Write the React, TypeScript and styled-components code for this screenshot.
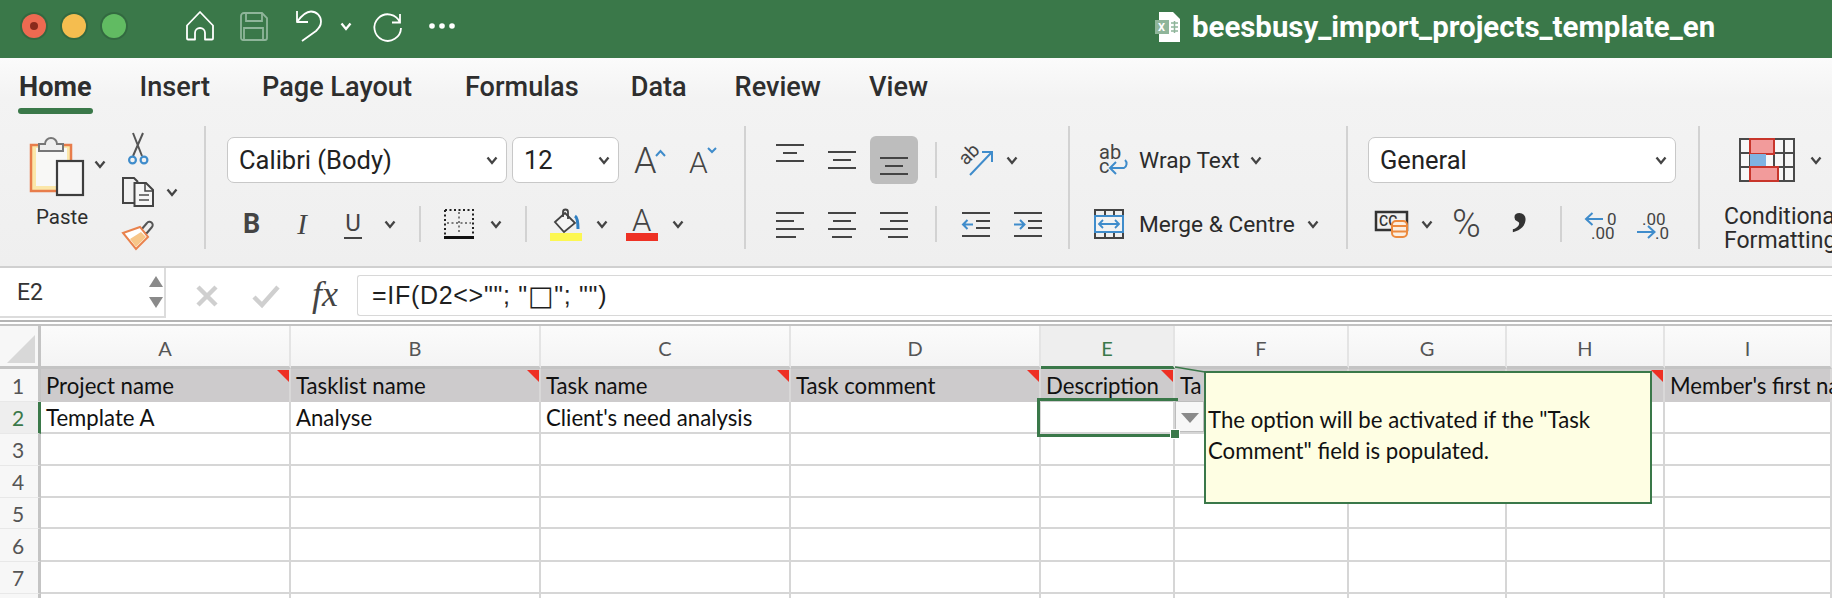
import React from 'react';
import styled, {createGlobalStyle} from 'styled-components';

const GREEN = '#3a7849';
const BLUE = '#3f8ccb';
const INK = '#444444';
const UI_FONT = 'Roboto, "Liberation Sans", sans-serif';
const CELL_FONT = 'Lato, "Open Sans", sans-serif';

const GlobalStyle = createGlobalStyle`
    html, body {
        margin: 0;
        height: 598px;
        overflow: hidden;
        background: #ffffff;
    }

    svg {
        display: block;
        overflow: visible;
    }
`;

const Page = styled.div`
    width: 1832px;
    height: 598px;
    overflow: hidden;
    font-family: ${UI_FONT};
`;

const TitleBar = styled.header`
    display: flex;
    align-items: center;
    height: 58px;
    box-sizing: border-box;
    padding-bottom: 6px;
    background: ${GREEN};
    color: #ffffff;
`;

const Light = styled.span<{$color: string; $gap: number}>`
    width: 24px;
    height: 24px;
    margin-left: ${(p) => p.$gap}px;
    border-radius: 50%;
    background: ${(p) => p.$color};
    box-shadow: 0 0 0 2px rgba(0, 0, 0, 0.12);
    display: flex;
    align-items: center;
    justify-content: center;
`;

const LightDot = styled.span`
    width: 8px;
    height: 8px;
    border-radius: 50%;
    background: #8a2a1c;
`;

const QuickIcon = styled.svg<{$gap: number}>`
    flex: none;
    margin-left: ${(p) => p.$gap}px;
`;

const FileName = styled.div`
    display: flex;
    align-items: center;
    margin: 2px 0 0 700px;
    white-space: nowrap;
    font-size: 29.4px;
    font-weight: 700;
`;

const FileText = styled.span`
    margin-left: 11px;
`;

const TabRow = styled.nav`
    display: flex;
    height: 68px;
    padding-left: 19px;
    font-size: 27.1px;
    color: #2e2e2e;
`;

const Tab = styled.div<{$gap?: number; $active?: boolean}>`
    position: relative;
    margin-left: ${(p) => p.$gap ?? 0}px;
    padding-top: 14px;
    line-height: 30px;
    font-weight: ${(p) => (p.$active ? 700 : 500)};

    ${(p) => p.$active && `
        &::after {
            content: '';
            position: absolute;
            left: -1px;
            right: -1px;
            top: 50px;
            height: 6px;
            border-radius: 3px;
            background: ${GREEN};
        }
    `}
`;

const Ribbon = styled.section`
    height: 210px;
    box-sizing: border-box;
    background: linear-gradient(#fbfbfb 0, #f3f3f3 40px, #efefef 100%);
    border-bottom: 2px solid #d0d0d0;
`;

const Tools = styled.div`
    display: flex;
    height: 128px;
`;

const Divider = styled.span`
    flex: none;
    width: 2px;
    height: 123px;
    background: #d2d2d2;
`;

const Group = styled.div<{$width: number}>`
    flex: none;
    width: ${(p) => p.$width}px;
    display: grid;
    grid-template-rows: 68px 60px;
`;

const ToolRow = styled.div`
    display: flex;
    align-items: center;
`;

const ClipboardGroup = styled.div`
    flex: none;
    width: 204px;
    display: flex;
    align-items: flex-start;
`;

const PasteButton = styled.div`
    width: 64px;
    padding: 10px 0 0 30px;
    font-size: 20.5px;
    color: #2e2e2e;
`;

const PasteLabel = styled.div`
    margin-top: 7px;
    padding-left: 6px;
    line-height: 26px;
`;

const ClipStack = styled.div`
    display: flex;
    flex-direction: column;
    align-items: flex-start;
    margin-left: 16px;
`;

const Btn = styled.span<{$gap?: number; $top?: number; $bottom?: number}>`
    flex: none;
    display: inline-flex;
    align-items: center;
    margin-left: ${(p) => p.$gap ?? 0}px;
    margin-top: ${(p) => p.$top ?? 0}px;
    margin-bottom: ${(p) => p.$bottom ?? 0}px;
    color: ${INK};
`;

const Pressed = styled.span<{$gap: number}>`
    flex: none;
    width: 48px;
    height: 48px;
    margin-left: ${(p) => p.$gap}px;
    border-radius: 6px;
    background: #bdbdbd;
    display: flex;
    align-items: center;
    justify-content: center;
`;

const Select = styled.div<{$width: number; $gap: number}>`
    flex: none;
    box-sizing: border-box;
    width: ${(p) => p.$width}px;
    height: 46px;
    margin-left: ${(p) => p.$gap}px;
    padding: 0 8px 0 11px;
    display: flex;
    align-items: center;
    justify-content: space-between;
    border: 1px solid #c8c8c8;
    border-radius: 7px;
    background: #ffffff;
    color: #222222;
    font-size: 25.5px;
`;

const Letter = styled.span<{$gap: number; $font?: string; $weight?: number; $italic?: boolean; $size: number; $width: number; $line?: boolean}>`
    flex: none;
    width: ${(p) => p.$width}px;
    margin-left: ${(p) => p.$gap}px;
    text-align: center;
    font-family: ${(p) => p.$font ?? UI_FONT};
    font-size: ${(p) => p.$size}px;
    font-weight: ${(p) => p.$weight ?? 400};
    font-style: ${(p) => (p.$italic ? 'italic' : 'normal')};
    line-height: 30px;
    color: ${INK};
    ${(p) => p.$line && `border-bottom: 2px solid ${INK}; line-height: 28px;`}
`;

const VSep = styled.span<{$gap: number}>`
    flex: none;
    width: 2px;
    height: 36px;
    margin-left: ${(p) => p.$gap}px;
    background: #d2d2d2;
`;

const ToolText = styled.span<{$gap: number; $width: number}>`
    flex: none;
    width: ${(p) => p.$width}px;
    margin-left: ${(p) => p.$gap}px;
    white-space: nowrap;
    font-size: 22.7px;
    color: #2b2b2b;
`;

const CondLabel = styled.div`
    font-size: 23px;
    line-height: 24px;
    color: #2b2b2b;
    white-space: nowrap;
    margin: 11px 0 0 24px;
`;

const FormulaBar = styled.div`
    display: flex;
    height: 54px;
    box-sizing: border-box;
    border-bottom: 2px solid #b4b4b4;
    background: #ffffff;
`;

const NameBox = styled.div`
    flex: none;
    box-sizing: border-box;
    width: 166px;
    height: 50px;
    padding: 0 0 0 17px;
    display: flex;
    align-items: center;
    justify-content: space-between;
    background: #ffffff;
    border-right: 2px solid #dcdcdc;
    border-bottom: 2px solid #dcdcdc;
    font-size: 23px;
    color: #333333;
`;

const Spin = styled.span`
    display: flex;
    flex-direction: column;
    gap: 10px;
    margin-right: 1px;
`;

const FormulaTools = styled.div`
    flex: none;
    width: 191px;
    padding-top: 3px;
    box-sizing: border-box;
    display: flex;
    align-items: center;
`;

const FxMark = styled.span`
    margin: -3px 0 0 32px;
    font-family: "Liberation Serif", serif;
    font-style: italic;
    font-size: 36px;
    color: #444444;
`;

const FormulaInput = styled.div`
    flex: 1;
    margin: 7px 0 4px;
    padding-left: 14px;
    display: flex;
    align-items: center;
    border: 1px solid #d8d8d8;
    border-right: 0;
    border-radius: 3px 0 0 3px;
    font-size: 25px;
    letter-spacing: 0.7px;
    white-space: pre;
    color: #1f1f1f;
    font-family: "Liberation Sans", sans-serif;
`;

const BoxGlyph = styled.span`
    font-family: "DejaVu Sans", sans-serif;
    font-size: 27px;
    line-height: 1;
`;

const SheetGap = styled.div`
    height: 2px;
    border-bottom: 2px solid #c2c2c2;
`;

const Sheet = styled.div`
    position: relative;
    display: grid;
    grid-template-columns: 41px 250px 250px 250px 250px 134px 174px 158px 158px 1fr;
    grid-template-rows: 43px 33px 32px 32px 32px 31px 33px 32px 32px;
    font-family: ${CELL_FONT};
    font-size: 22.2px;
    color: #111111;
`;

const Corner = styled.div`
    position: relative;
    background: #f7f7f7;
    border-right: 3px solid #c4c4c4;
    border-bottom: 3px solid #c4c4c4;

    &::before {
        content: '';
        position: absolute;
        left: 7px;
        top: 9px;
        width: 28px;
        height: 28px;
        background: #d8d8d8;
        clip-path: polygon(100% 0, 100% 100%, 0 100%);
    }
`;

const ColHead = styled.div<{$active?: boolean}>`
    display: flex;
    align-items: center;
    justify-content: center;
    padding-top: 3px;
    font-size: 20px;
    background: ${(p) => (p.$active ? '#eeeeee' : 'linear-gradient(#fbfbfb, #f4f4f4)')};
    border-right: 2px solid #e4e4e4;
    border-bottom: 3px solid ${(p) => (p.$active ? GREEN : '#c4c4c4')};
    color: ${(p) => (p.$active ? GREEN : '#555555')};
    box-sizing: border-box;
`;

const RowHead = styled.div<{$active?: boolean}>`
    display: flex;
    align-items: center;
    padding-left: 12px;
    box-sizing: border-box;
    font-size: 21px;
    background: ${(p) => (p.$active ? '#eeeeee' : '#f7f7f7')};
    border-right: 3px solid ${(p) => (p.$active ? GREEN : '#c4c4c4')};
    border-bottom: 1px solid #e8e8e8;
    color: ${(p) => (p.$active ? GREEN : '#555555')};
`;

const Cell = styled.div<{$head?: boolean; $note?: boolean; $selected?: boolean}>`
    position: relative;
    box-sizing: border-box;
    padding-left: 5px;
    display: flex;
    align-items: center;
    white-space: nowrap;
    min-width: 0;
    z-index: ${(p) => (p.$selected ? 1 : 'auto')};
    background: ${(p) => (p.$head ? '#cdcbcc' : '#ffffff')};
    border-right: 2px solid ${(p) => (p.$head ? '#d9d8d8' : '#d6d6d6')};
    border-bottom: ${(p) => (p.$head ? '0' : '2px solid #d6d6d6')};

    ${(p) => p.$note && `
        &::after {
            content: '';
            position: absolute;
            right: 0;
            top: 1px;
            width: 12px;
            height: 12px;
            background: #ee2f23;
            clip-path: polygon(0 0, 100% 0, 100% 100%);
        }
    `}
`;

const Selection = styled.span`
    position: absolute;
    left: -4px;
    right: -5px;
    top: -4px;
    bottom: -5px;
    border: 3px solid ${GREEN};
`;

const FillHandle = styled.span`
    position: absolute;
    right: -7px;
    bottom: -7px;
    width: 8px;
    height: 8px;
    background: ${GREEN};
    border: 1px solid #ffffff;
    z-index: 1;
`;

const DropButton = styled.span`
    position: absolute;
    left: calc(100% + 2px);
    top: -1px;
    width: 29px;
    height: 31px;
    box-sizing: border-box;
    border: 1px solid #bdbdbd;
    background: #f7f7f7;
    display: flex;
    justify-content: center;
    padding-top: 11px;

    &::before {
        content: '';
        width: 0;
        height: 0;
        border-left: 9px solid transparent;
        border-right: 9px solid transparent;
        border-top: 10px solid #8a8a8a;
    }
`;

const Comment = styled.aside`
    position: absolute;
    left: 1204px;
    top: 45px;
    width: 448px;
    height: 133px;
    box-sizing: border-box;
    padding: 0 2px 6px 2px;
    display: flex;
    align-items: center;
    border: 2px solid ${GREEN};
    background: #fefee3;
    line-height: 31px;
    z-index: 2;
`;

const Leader = styled.svg`
    position: absolute;
    left: 1175px;
    top: 40px;
    z-index: 2;
`;

const Chevron = ({gap = 0, top = 0, color = INK}: {gap?: number; top?: number; color?: string}) => (
    <Btn
        $gap={gap}
        $top={top}
    >
        <svg
            width='12'
            height='9'
            viewBox='0 0 12 9'
        >
            <path
                d='M1.5 1.5 6 7l4.5-5.5'
                fill='none'
                stroke={color}
                strokeWidth='2.3'
            />
        </svg>
    </Btn>
);

const Lines = ({rows, height = 27}: {rows: Array<[number, number, number]>; height?: number}) => (
    <svg
        width='28'
        height={height}
        viewBox={`0 0 28 ${height}`}
    >
        {rows.map(([x, y, w]) => (
            <rect
                key={`${x}-${y}`}
                x={x}
                y={y}
                width={w}
                height='2'
                fill={INK}
            />
        ))}
    </svg>
);

const IndentIcon = ({right}: {right?: boolean}) => (
    <svg
        width='28'
        height='27'
        viewBox='0 0 28 27'
    >
        <path
            d='M0 2h28M14 10h14M14 17h14M0 25h28'
            stroke={INK}
            strokeWidth='2'
        />
        <path
            d={right ? 'M0 13.5h10M6 9l4.5 4.5L6 18' : 'M11 13.5H1M5.5 9 1 13.5 5.5 18'}
            fill='none'
            stroke={BLUE}
            strokeWidth='2'
        />
    </svg>
);

const DecimalIcon = ({more}: {more?: boolean}) => (
    <svg
        width='31'
        height='31'
        viewBox='0 0 31 31'
    >
        <g
            fontFamily='Roboto, sans-serif'
            fontSize='17'
            fill={INK}
        >
            <text
                x={more ? 5 : 22}
                y='16'
            >
                {more ? '.00' : '0'}
            </text>
            <text
                x={more ? 18 : 6}
                y='30'
            >
                {more ? '.0' : '.00'}
            </text>
        </g>
        <path
            d={more ? 'M0 23h17M11 17l6.500 6-6.500 6' : 'M18 10H1M7.500 4 1 10l6.500 6'}
            fill='none'
            stroke={BLUE}
            strokeWidth='2'
        />
    </svg>
);

const columns = ['A', 'B', 'C', 'D', 'E', 'F', 'G', 'H', 'I'];
const headers = ['Project name', 'Tasklist name', 'Task name', 'Task comment', 'Description', 'Ta', '', '', "Member's first name"];
const noted = ['A', 'B', 'C', 'D', 'E', 'H'];
const secondRow = ['Template A', 'Analyse', "Client's need analysis", '', '', '', '', '', ''];
const emptyRows = [3, 4, 5, 6, 7, 8];

export default function App() {
    return (
        <Page>
            <GlobalStyle/>
            <TitleBar>
                <Light
                    $color='#ed6a51'
                    $gap={22}
                >
                    <LightDot/>
                </Light>
                <Light
                    $color='#f5bd4f'
                    $gap={16}
                />
                <Light
                    $color='#61bb62'
                    $gap={16}
                />
                <QuickIcon
                    $gap={60}
                    width='28'
                    height='30'
                    viewBox='0 0 28 30'
                >
                    <path
                        d='M1 14.500 14 1 27 14.500V27.500a1 1 0 0 1-1 1H19V22a5 5 0 0 0-10 0v6.500H2a1 1 0 0 1-1-1Z'
                        fill='none'
                        stroke='#ffffff'
                        strokeWidth='1.800'
                        strokeLinejoin='round'
                    />
                </QuickIcon>
                <QuickIcon
                    $gap={26}
                    width='28'
                    height='30'
                    viewBox='0 0 28 30'
                >
                    <g
                        fill='none'
                        stroke='#8fb59a'
                        strokeWidth='1.800'
                    >
                        <path d='M1 5a3 3 0 0 1 3-3h18l5 5v20a2 2 0 0 1-2 2H3a2 2 0 0 1-2-2Z'/>
                        <path d='M6 2v8h16V2M4 29V17h19v12'/>
                    </g>
                </QuickIcon>
                <QuickIcon
                    $gap={28}
                    width='26'
                    height='32'
                    viewBox='0 0 26 32'
                >
                    <path
                        d='M1 1V12H12M1 12C6 5 10 1.500 15 1.500A10 10 0 0 1 25 11.500C25 16 23 18 20 21L6 31'
                        fill='none'
                        stroke='#ffffff'
                        strokeWidth='1.800'
                        strokeLinejoin='round'
                    />
                </QuickIcon>
                <Chevron
                    gap={18}
                    color='#ffffff'
                />
                <QuickIcon
                    $gap={22}
                    width='28'
                    height='30'
                    viewBox='0 0 28 30'
                >
                    <path
                        d='M26 11.500A13.300 13.300 0 1 0 27 17M26 3V11.500H18'
                        fill='none'
                        stroke='#ffffff'
                        strokeWidth='1.800'
                    />
                </QuickIcon>
                <QuickIcon
                    $gap={27}
                    width='26'
                    height='6'
                    viewBox='0 0 26 6'
                >
                    <g fill='#ffffff'>
                        <circle
                            cx='3'
                            cy='3'
                            r='2.800'
                        />
                        <circle
                            cx='13'
                            cy='3'
                            r='2.800'
                        />
                        <circle
                            cx='23'
                            cy='3'
                            r='2.800'
                        />
                    </g>
                </QuickIcon>
                <FileName>
                    <svg
                        width='26'
                        height='30'
                        viewBox='0 0 26 30'
                    >
                        <path
                            d='M4 0h14l7 7v23H4Z'
                            fill='#ffffff'
                        />
                        <rect
                            x='0'
                            y='8'
                            width='14'
                            height='14'
                            fill='#8fb59a'
                        />
                        <text
                            x='3'
                            y='19'
                            fontSize='11'
                            fontWeight='700'
                            fill='#ffffff'
                        >
                            {'X'}
                        </text>
                        <path
                            d='M16 11h7M16 15h7M16 19h7M19.500 9v12'
                            stroke='#8fb59a'
                            strokeWidth='1.500'
                        />
                    </svg>
                    <FileText>{'beesbusy_import_projects_template_en'}</FileText>
                </FileName>
            </TitleBar>

            <Ribbon>
                <TabRow>
                    <Tab $active={true}>{'Home'}</Tab>
                    <Tab $gap={48}>{'Insert'}</Tab>
                    <Tab $gap={52}>{'Page Layout'}</Tab>
                    <Tab $gap={53}>{'Formulas'}</Tab>
                    <Tab $gap={52}>{'Data'}</Tab>
                    <Tab $gap={48}>{'Review'}</Tab>
                    <Tab $gap={48}>{'View'}</Tab>
                </TabRow>
                <Tools>
                    <ClipboardGroup>
                        <PasteButton>
                            <svg
                                width='54'
                                height='61'
                                viewBox='0 0 54 61'
                            >
                                <rect
                                    x='1'
                                    y='9'
                                    width='40'
                                    height='46'
                                    fill='#fbe7a9'
                                    stroke='#e87d4b'
                                    strokeWidth='2.500'
                                />
                                <rect
                                    x='6'
                                    y='12'
                                    width='31'
                                    height='38'
                                    fill='#f8f8f6'
                                />
                                <path
                                    d='M9 15V8h6a6 6 0 0 1 12 0h6v7Z'
                                    fill='#eeeeee'
                                    stroke='#777777'
                                    strokeWidth='2'
                                />
                                <rect
                                    x='27'
                                    y='25'
                                    width='26'
                                    height='34'
                                    fill='#f6f6f6'
                                    stroke='#3d3d3d'
                                    strokeWidth='2.200'
                                />
                            </svg>
                            <PasteLabel>{'Paste'}</PasteLabel>
                        </PasteButton>
                        <Chevron top={34}/>
                        <ClipStack>
                            <Btn
                                $gap={5}
                                $top={7}
                            >
                                <svg
                                    width='22'
                                    height='32'
                                    viewBox='0 0 22 32'
                                >
                                    <path
                                        d='M6 0l9 23M16 0 6 23'
                                        stroke='#555555'
                                        strokeWidth='2'
                                        fill='none'
                                    />
                                    <circle
                                        cx='5.500'
                                        cy='27'
                                        r='3.400'
                                        fill='none'
                                        stroke={BLUE}
                                        strokeWidth='2.200'
                                    />
                                    <circle
                                        cx='17'
                                        cy='27'
                                        r='3.400'
                                        fill='none'
                                        stroke={BLUE}
                                        strokeWidth='2.200'
                                    />
                                </svg>
                            </Btn>
                            <Btn $top={12}>
                                <svg
                                    width='32'
                                    height='31'
                                    viewBox='0 0 32 31'
                                >
                                    <path
                                        d='M12 26H1V1h11l4 4'
                                        fill='none'
                                        stroke={INK}
                                        strokeWidth='2'
                                    />
                                    <path
                                        d='M12.500 6H24l7 7v16H12.500Z'
                                        fill='#f6f6f6'
                                        stroke={INK}
                                        strokeWidth='2'
                                    />
                                    <path
                                        d='M23 6v8h8'
                                        fill='none'
                                        stroke={INK}
                                        strokeWidth='1.500'
                                    />
                                    <path
                                        d='M17 18h10M17 23h10'
                                        stroke='#777777'
                                        strokeWidth='2'
                                    />
                                </svg>
                                <Chevron gap={12}/>
                            </Btn>
                            <Btn $top={12}>
                                <svg
                                    width='32'
                                    height='30'
                                    viewBox='0 0 32 30'
                                >
                                    <path
                                        d='M19 10l6-7a3 3 0 0 1 5 4l-6 7Z'
                                        fill='#eeeeee'
                                        stroke='#555555'
                                        strokeWidth='2'
                                    />
                                    <path
                                        d='M1 13 18 7l8 10-12 12Z'
                                        fill='#ffffff'
                                        stroke='#e9824d'
                                        strokeWidth='2'
                                    />
                                    <path
                                        d='M8 19 14 27 24 17 19 12Z'
                                        fill='#f7c689'
                                    />
                                </svg>
                            </Btn>
                        </ClipStack>
                    </ClipboardGroup>
                    <Divider/>

                    <Group $width={538}>
                        <ToolRow>
                            <Select
                                $width={280}
                                $gap={21}
                            >
                                {'Calibri (Body)'}
                                <Chevron/>
                            </Select>
                            <Select
                                $width={107}
                                $gap={5}
                            >
                                {'12'}
                                <Chevron/>
                            </Select>
                            <Btn $gap={15}>
                                <svg
                                    width='31'
                                    height='28'
                                    viewBox='0 0 31 28'
                                >
                                    <text
                                        x='0'
                                        y='27'
                                        fontFamily='Roboto, sans-serif'
                                        fontWeight='300'
                                        fontSize='36'
                                        fill={INK}
                                    >
                                        {'A'}
                                    </text>
                                    <path
                                        d='M22 10l4.500-5 4.500 5'
                                        fill='none'
                                        stroke={BLUE}
                                        strokeWidth='2'
                                    />
                                </svg>
                            </Btn>
                            <Btn $gap={24}>
                                <svg
                                    width='28'
                                    height='28'
                                    viewBox='0 0 28 28'
                                >
                                    <text
                                        x='0'
                                        y='27'
                                        fontFamily='Roboto, sans-serif'
                                        fontWeight='300'
                                        fontSize='30'
                                        fill={INK}
                                    >
                                        {'A'}
                                    </text>
                                    <path
                                        d='M19 2l4 4 4-4'
                                        fill='none'
                                        stroke={BLUE}
                                        strokeWidth='2'
                                    />
                                </svg>
                            </Btn>
                        </ToolRow>
                        <ToolRow>
                            <Letter
                                $gap={37}
                                $width={16}
                                $size={27}
                                $weight={700}
                            >
                                {'B'}
                            </Letter>
                            <Letter
                                $gap={37}
                                $width={12}
                                $size={29}
                                $italic={true}
                                $font='"Liberation Serif", serif'
                            >
                                {'I'}
                            </Letter>
                            <Letter
                                $gap={36}
                                $width={18}
                                $size={24}
                                $line={true}
                            >
                                {'U'}
                            </Letter>
                            <Chevron gap={22}/>
                            <VSep $gap={23}/>
                            <Btn $gap={23}>
                                <svg
                                    width='30'
                                    height='30'
                                    viewBox='0 0 30 30'
                                >
                                    <path
                                        d='M1 1h28v26M1 1v26'
                                        fill='none'
                                        stroke='#222222'
                                        strokeWidth='2'
                                        strokeDasharray='2 2.500'
                                    />
                                    <path
                                        d='M15 3v22M3 14h24'
                                        fill='none'
                                        stroke='#555555'
                                        strokeWidth='1.500'
                                        strokeDasharray='2 2.500'
                                    />
                                    <rect
                                        x='0'
                                        y='27'
                                        width='30'
                                        height='3'
                                        fill='#111111'
                                    />
                                </svg>
                            </Btn>
                            <Chevron gap={16}/>
                            <VSep $gap={23}/>
                            <Btn
                                $gap={23}
                                $top={2}
                            >
                                <svg
                                    width='32'
                                    height='32'
                                    viewBox='0 0 32 32'
                                >
                                    <path
                                        d='M5 13 15 4l10 10-11 9Z'
                                        fill='#f6f6f6'
                                        stroke={INK}
                                        strokeWidth='1.800'
                                    />
                                    <path
                                        d='M13 8V3a2.500 2.500 0 0 1 5 0v7'
                                        fill='none'
                                        stroke={INK}
                                        strokeWidth='1.800'
                                    />
                                    <path
                                        d='M25 7c3 2 3 8 3 13'
                                        fill='none'
                                        stroke='#2f7fc1'
                                        strokeWidth='3'
                                    />
                                    <rect
                                        x='0'
                                        y='24'
                                        width='32'
                                        height='8'
                                        fill='#fcf752'
                                    />
                                </svg>
                            </Btn>
                            <Chevron gap={14}/>
                            <Btn
                                $gap={18}
                                $top={2}
                            >
                                <svg
                                    width='32'
                                    height='32'
                                    viewBox='0 0 32 32'
                                >
                                    <text
                                        x='6'
                                        y='22'
                                        fontFamily='Roboto, sans-serif'
                                        fontWeight='300'
                                        fontSize='31'
                                        fill={INK}
                                    >
                                        {'A'}
                                    </text>
                                    <rect
                                        x='0'
                                        y='24'
                                        width='32'
                                        height='8'
                                        fill='#ee3124'
                                    />
                                </svg>
                            </Btn>
                            <Chevron gap={14}/>
                        </ToolRow>
                    </Group>
                    <Divider/>

                    <Group $width={322}>
                        <ToolRow>
                            <Btn
                                $gap={30}
                                $bottom={14}
                            >
                                <Lines
                                    rows={[[0, 0, 28], [7, 8, 14], [0, 16, 28]]}
                                    height={18}
                                />
                            </Btn>
                            <Btn $gap={24}>
                                <Lines
                                    rows={[[0, 0, 28], [5, 8, 18], [0, 16, 28]]}
                                    height={18}
                                />
                            </Btn>
                            <Pressed $gap={14}>
                                <Lines
                                    rows={[[0, 12, 28], [5, 20, 18], [0, 28, 28]]}
                                    height={30}
                                />
                            </Pressed>
                            <VSep $gap={17}/>
                            <Btn $gap={23}>
                                <svg
                                    width='33'
                                    height='31'
                                    viewBox='0 0 33 31'
                                >
                                    <text
                                        x='6'
                                        y='21'
                                        fontFamily='Roboto, sans-serif'
                                        fontSize='19'
                                        fill={INK}
                                        transform='rotate(-45 6 21)'
                                    >
                                        {'ab'}
                                    </text>
                                    <path
                                        d='M10 30 31 8M22 7h10v10'
                                        fill='none'
                                        stroke={BLUE}
                                        strokeWidth='2'
                                    />
                                </svg>
                            </Btn>
                            <Chevron gap={13}/>
                        </ToolRow>
                        <ToolRow>
                            <Btn $gap={30}>
                                <Lines rows={[[0, 1, 28], [0, 9, 18], [0, 17, 28], [0, 25, 20]]}/>
                            </Btn>
                            <Btn $gap={24}>
                                <Lines rows={[[0, 1, 28], [5, 9, 18], [0, 17, 28], [4, 25, 20]]}/>
                            </Btn>
                            <Btn $gap={24}>
                                <Lines rows={[[0, 1, 28], [10, 9, 18], [0, 17, 28], [8, 25, 20]]}/>
                            </Btn>
                            <VSep $gap={27}/>
                            <Btn $gap={25}>
                                <IndentIcon/>
                            </Btn>
                            <Btn $gap={24}>
                                <IndentIcon right={true}/>
                            </Btn>
                        </ToolRow>
                    </Group>
                    <Divider/>

                    <Group $width={276}>
                        <ToolRow>
                            <Btn $gap={29}>
                                <svg
                                    width='30'
                                    height='30'
                                    viewBox='0 0 30 30'
                                >
                                    <g
                                        fontFamily='Roboto, sans-serif'
                                        fontSize='20'
                                        fill={INK}
                                    >
                                        <text
                                            x='0'
                                            y='14'
                                        >
                                            {'ab'}
                                        </text>
                                        <text
                                            x='0'
                                            y='28'
                                        >
                                            {'c'}
                                        </text>
                                    </g>
                                    <path
                                        d='M26 15a5 5 0 0 1-1 8H12M17 17l-6 6 6 6'
                                        fill='none'
                                        stroke={BLUE}
                                        strokeWidth='2'
                                    />
                                </svg>
                            </Btn>
                            <ToolText
                                $gap={10}
                                $width={99}
                            >
                                {'Wrap Text'}
                            </ToolText>
                            <Chevron gap={12}/>
                        </ToolRow>
                        <ToolRow>
                            <Btn $gap={24}>
                                <svg
                                    width='30'
                                    height='30'
                                    viewBox='0 0 30 30'
                                >
                                    <path
                                        d='M1 1h28v28H1ZM11 1v28M20 1v28'
                                        fill='none'
                                        stroke={INK}
                                        strokeWidth='2'
                                    />
                                    <rect
                                        x='1'
                                        y='7'
                                        width='28'
                                        height='16'
                                        fill='#f3f3f3'
                                        stroke={BLUE}
                                        strokeWidth='2'
                                    />
                                    <path
                                        d='M5 15h20M9 11l-4 4 4 4M21 11l4 4-4 4'
                                        fill='none'
                                        stroke={BLUE}
                                        strokeWidth='1.800'
                                    />
                                </svg>
                            </Btn>
                            <ToolText
                                $gap={15}
                                $width={157}
                            >
                                {'Merge & Centre'}
                            </ToolText>
                            <Chevron gap={11}/>
                        </ToolRow>
                    </Group>
                    <Divider/>

                    <Group $width={350}>
                        <ToolRow>
                            <Select
                                $width={308}
                                $gap={20}
                            >
                                {'General'}
                                <Chevron/>
                            </Select>
                        </ToolRow>
                        <ToolRow>
                            <Btn $gap={27}>
                                <svg
                                    width='33'
                                    height='27'
                                    viewBox='0 0 33 27'
                                >
                                    <rect
                                        x='1'
                                        y='1'
                                        width='31'
                                        height='18'
                                        fill='none'
                                        stroke='#333333'
                                        strokeWidth='2.500'
                                    />
                                    <text
                                        x='4'
                                        y='15'
                                        fontFamily='Roboto, sans-serif'
                                        fontWeight='500'
                                        fontSize='14'
                                        fill='#333333'
                                    >
                                        {'CC'}
                                    </text>
                                    <rect
                                        x='17'
                                        y='10'
                                        width='15'
                                        height='16'
                                        rx='4'
                                        fill='#fbefe2'
                                        stroke='#ec8a3e'
                                        strokeWidth='2'
                                    />
                                    <path
                                        d='M17 15h15M17 20.500h15'
                                        stroke='#ec8a3e'
                                        strokeWidth='2'
                                    />
                                </svg>
                            </Btn>
                            <Chevron gap={13}/>
                            <Btn $gap={19}>
                                <svg
                                    width='30'
                                    height='28'
                                    viewBox='0 0 30 28'
                                >
                                    <text
                                        x='0'
                                        y='27'
                                        fontFamily='Roboto, sans-serif'
                                        fontWeight='300'
                                        fontSize='39'
                                        fill={INK}
                                    >
                                        {'%'}
                                    </text>
                                </svg>
                            </Btn>
                            <Btn $gap={30}>
                                <svg
                                    width='16'
                                    height='24'
                                    viewBox='0 0 16 24'
                                >
                                    <text
                                        x='0'
                                        y='10'
                                        fontFamily='"Liberation Serif", serif'
                                        fontWeight='700'
                                        fontSize='64'
                                        fill='#333333'
                                    >
                                        {','}
                                    </text>
                                </svg>
                            </Btn>
                            <VSep $gap={32}/>
                            <Btn $gap={23}>
                                <DecimalIcon/>
                            </Btn>
                            <Btn $gap={21}>
                                <DecimalIcon more={true}/>
                            </Btn>
                        </ToolRow>
                    </Group>
                    <Divider/>

                    <Group $width={130}>
                        <ToolRow>
                            <Btn $gap={39}>
                                <svg
                                    width='56'
                                    height='44'
                                    viewBox='0 0 56 44'
                                >
                                    <path
                                        d='M1 1h54v42H1ZM1 15h54M1 29h54M11 1v42M35 1v42M45 1v42'
                                        fill='#f7f7f7'
                                        stroke='#4a4a4a'
                                        strokeWidth='2'
                                    />
                                    <rect
                                        x='11'
                                        y='1'
                                        width='24'
                                        height='15'
                                        fill='#f29b9b'
                                        stroke='#c8352b'
                                        strokeWidth='2'
                                    />
                                    <rect
                                        x='11'
                                        y='16'
                                        width='16'
                                        height='13'
                                        fill='#7fb3e2'
                                    />
                                    <rect
                                        x='11'
                                        y='29'
                                        width='28'
                                        height='14'
                                        fill='#f29b9b'
                                        stroke='#c8352b'
                                        strokeWidth='2'
                                    />
                                </svg>
                            </Btn>
                            <Chevron gap={15}/>
                        </ToolRow>
                        <CondLabel>
                            {'Conditional'}
                            <br/>
                            {'Formatting'}
                        </CondLabel>
                    </Group>
                </Tools>
            </Ribbon>

            <FormulaBar>
                <NameBox>
                    {'E2'}
                    <Spin>
                        <svg
                            width='14'
                            height='11'
                            viewBox='0 0 14 11'
                        >
                            <path
                                d='M7 0 14 11H0Z'
                                fill='#8a8a8a'
                            />
                        </svg>
                        <svg
                            width='14'
                            height='11'
                            viewBox='0 0 14 11'
                        >
                            <path
                                d='M7 11 14 0H0Z'
                                fill='#8a8a8a'
                            />
                        </svg>
                    </Spin>
                </NameBox>
                <FormulaTools>
                    <Btn $gap={30}>
                        <svg
                            width='22'
                            height='22'
                            viewBox='0 0 22 22'
                        >
                            <path
                                d='M2 2 20 20M20 2 2 20'
                                stroke='#cfcfcf'
                                strokeWidth='4.500'
                            />
                        </svg>
                    </Btn>
                    <Btn $gap={34}>
                        <svg
                            width='28'
                            height='22'
                            viewBox='0 0 28 22'
                        >
                            <path
                                d='M2 12l8 8L26 2'
                                fill='none'
                                stroke='#cfcfcf'
                                strokeWidth='4.500'
                            />
                        </svg>
                    </Btn>
                    <FxMark>{'fx'}</FxMark>
                </FormulaTools>
                <FormulaInput>
                    {'=IF(D2<>""; "'}
                    <BoxGlyph>{'□'}</BoxGlyph>
                    {'"; "")'}
                </FormulaInput>
            </FormulaBar>
            <SheetGap/>

            <Sheet>
                <Corner/>
                {columns.map((c) => (
                    <ColHead
                        key={c}
                        $active={c === 'E'}
                    >
                        {c}
                    </ColHead>
                ))}

                <RowHead>{'1'}</RowHead>
                {columns.map((c, i) => (
                    <Cell
                        key={c}
                        $head={true}
                        $note={noted.includes(c)}
                    >
                        {headers[i]}
                    </Cell>
                ))}

                <RowHead $active={true}>{'2'}</RowHead>
                {columns.map((c, i) => (
                    <Cell
                        key={c}
                        $selected={c === 'E'}
                    >
                        {secondRow[i]}
                        {c === 'E' && (
                            <>
                                <Selection/>
                                <FillHandle/>
                                <DropButton/>
                            </>
                        )}
                    </Cell>
                ))}

                {emptyRows.map((n) => (
                    <React.Fragment key={n}>
                        <RowHead>{n}</RowHead>
                        {columns.map((c) => (
                            <Cell key={c}/>
                        ))}
                    </React.Fragment>
                ))}

                <Leader
                    width='30'
                    height='8'
                    viewBox='0 0 30 8'
                >
                    <path
                        d='M0 1 30 6'
                        stroke={GREEN}
                        strokeWidth='1.500'
                    />
                </Leader>
                <Comment>
                    {'The option will be activated if the "Task Comment" field is populated.'}
                </Comment>
            </Sheet>
        </Page>
    );
}
